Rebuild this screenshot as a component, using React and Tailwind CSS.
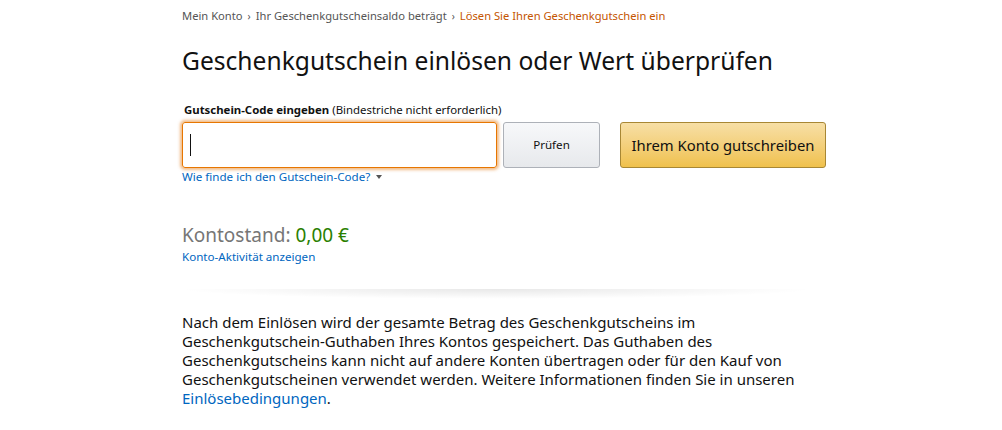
const crumbs = ["Mein Konto", "Ihr Geschenkgutscheinsaldo beträgt"];

export default function App() {
  return (
    <div className="min-h-[430px] bg-white text-[#111] font-['Noto_Sans',sans-serif]">
      <div className="w-[644px] ml-[182px]">
        <nav className="flex items-center pt-[7px] text-[11.2px] leading-[18px] text-[#555]">
          {crumbs.map((c) => (
            <span key={c} className="flex items-center">
              <span>{c}</span>
              <span className="mx-[5px] text-[10px] text-[#555]">›</span>
            </span>
          ))}
          <span className="text-[#c45500]">Lösen Sie Ihren Geschenkgutschein ein</span>
        </nav>

        <h1 className="mt-[19px] text-[24.6px] leading-[34px] font-normal">
          Geschenkgutschein einlösen oder Wert überprüfen
        </h1>

        <label className="block mt-[24px] ml-[2px] text-[11.4px] leading-[16px]">
          <span className="font-bold">Gutschein-Code eingeben</span>{" "}
          <span>(Bindestriche nicht erforderlich)</span>
        </label>

        <div className="flex items-center mt-[4px]">
          <div className="w-[315px] h-[46px] rounded-[3px] border border-[#e77600] shadow-[0_0_3px_2px_rgba(228,121,17,0.5)] flex items-center px-[7px]">
            <div className="w-px h-[22px] bg-[#111]" />
          </div>
          <button className="ml-[6px] w-[97px] h-[46px] rounded-[3px] border border-[#adb1b8] bg-gradient-to-b from-[#f7f8fa] to-[#e7e9ec] text-[11.6px] text-[#111]">
            Prüfen
          </button>
          <button className="ml-[20px] w-[206px] h-[46px] rounded-[3px] border border-[#a88734] bg-gradient-to-b from-[#f7dfa5] to-[#f0c14b] text-[14.8px] text-[#111]">
            Ihrem Konto gutschreiben
          </button>
        </div>

        <a className="flex items-center gap-[6px] text-[11.6px] leading-[17px] text-[#0066c0]">
          Wie finde ich den Gutschein-Code?
          <span className="w-0 h-0 border-l-[3.5px] border-r-[3.5px] border-t-[4px] border-l-transparent border-r-transparent border-t-[#555]" />
        </a>

        <div className="mt-[37px] text-[19px] leading-[26px] text-[#767676]">
          Kontostand: <span className="text-[#2a8000]">0,00 €</span>
        </div>
        <a className="block mt-[1px] text-[11.6px] leading-[16px] text-[#0066c0]">Konto-Aktivität anzeigen</a>
      </div>

      <div className="ml-[176px] w-[640px] h-[10px] mt-[24px] bg-[radial-gradient(ellipse_at_top,rgba(0,0,0,0.09),rgba(0,0,0,0)_70%)]" />

      <p className="ml-[182px] w-[644px] mt-[14px] text-[15px] leading-[19px] text-[#111]">
        Nach dem Einlösen wird der gesamte Betrag des Geschenkgutscheins im Geschenkgutschein-Guthaben Ihres Kontos gespeichert. Das Guthaben des Geschenkgutscheins kann nicht auf andere Konten übertragen oder für den Kauf von Geschenkgutscheinen verwendet werden. Weitere Informationen finden Sie in unseren{" "}
        <a className="text-[#0066c0]">Einlösebedingungen</a>.
      </p>
    </div>
  );
}
